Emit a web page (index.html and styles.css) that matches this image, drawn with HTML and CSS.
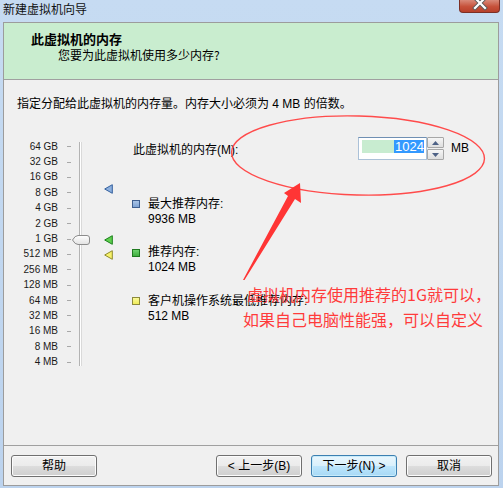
FILE: index.html
```html
<!DOCTYPE html>
<html lang="zh-CN">
<head>
<meta charset="utf-8">
<title>新建虚拟机向导</title>
<link rel="stylesheet" href="styles.css">
</head>
<body>
<div class="window">
  <div class="titlebar">
    <span class="title">新建虚拟机向导</span>
    <div class="close">
      <svg width="41" height="13" viewBox="0 0 41 13">
        <path d="M16 -2 L26 8 M26 -2 L16 8" stroke="#5a5a5a" stroke-width="4" stroke-linecap="square"/>
        <path d="M16 -2 L26 8 M26 -2 L16 8" stroke="#ffffff" stroke-width="2.2" stroke-linecap="square"/>
      </svg>
    </div>
  </div>
  <div class="panel">
    <div class="header">
      <div class="h-title">此虚拟机的内存</div>
      <div class="h-sub">您要为此虚拟机使用多少内存?</div>
    </div>
    <div class="main">
      <p class="intro">指定分配给此虚拟机的内存量。内存大小必须为 4 MB 的倍数。</p>
      <div class="mem">
        <div class="slider">
          <div class="scale">
            <div class="row"><span class="lbl">64 GB</span><span class="tick"></span></div>
            <div class="row"><span class="lbl">32 GB</span><span class="tick"></span></div>
            <div class="row"><span class="lbl">16 GB</span><span class="tick"></span></div>
            <div class="row"><span class="lbl">8 GB</span><span class="tick"></span></div>
            <div class="row"><span class="lbl">4 GB</span><span class="tick"></span></div>
            <div class="row"><span class="lbl">2 GB</span><span class="tick"></span></div>
            <div class="row"><span class="lbl">1 GB</span><span class="tick"></span></div>
            <div class="row"><span class="lbl">512 MB</span><span class="tick"></span></div>
            <div class="row"><span class="lbl">256 MB</span><span class="tick"></span></div>
            <div class="row"><span class="lbl">128 MB</span><span class="tick"></span></div>
            <div class="row"><span class="lbl">64 MB</span><span class="tick"></span></div>
            <div class="row"><span class="lbl">32 MB</span><span class="tick"></span></div>
            <div class="row"><span class="lbl">16 MB</span><span class="tick"></span></div>
            <div class="row"><span class="lbl">8 MB</span><span class="tick"></span></div>
            <div class="row"><span class="lbl">4 MB</span><span class="tick"></span></div>
          </div>
          <div class="track"></div>
          <svg class="thumb" width="18" height="10" viewBox="0 0 18 10">
            <defs>
              <linearGradient id="tg" x1="0" y1="0" x2="0" y2="1">
                <stop offset="0" stop-color="#ffffff"/>
                <stop offset="1" stop-color="#e2e2e2"/>
              </linearGradient>
            </defs>
            <path d="M0.5 5 Q3 0.5 6 0.5 L15 0.5 Q17.5 0.5 17.5 3 L17.5 7 Q17.5 9.5 15 9.5 L6 9.5 Q3 9.5 0.5 5 Z" fill="url(#tg)" stroke="#8c8c8c"/>
          </svg>
          <svg class="marker m-blue" width="9" height="10" viewBox="0 0 9 10"><path d="M0.7 5 L8.3 0.7 L8.3 9.3 Z" fill="#8db0de" stroke="#34609e" stroke-linejoin="round"/></svg>
          <svg class="marker m-green" width="9" height="10" viewBox="0 0 9 10"><path d="M0.7 5 L8.3 0.7 L8.3 9.3 Z" fill="#5fcf4f" stroke="#19801a" stroke-linejoin="round"/></svg>
          <svg class="marker m-yellow" width="9" height="10" viewBox="0 0 9 10"><path d="M0.7 5 L8.3 0.7 L8.3 9.3 Z" fill="#f7f26a" stroke="#8f8b2c" stroke-linejoin="round"/></svg>
        </div>
        <div class="right">
          <div class="memrow">
            <span class="memlabel">此虚拟机的内存(M):</span>
            <div class="numbox">
              <span class="fill"></span>
              <span class="sel">1024</span>
            </div>
            <div class="spin">
              <div class="sb"><svg width="7" height="4" viewBox="0 0 7 4"><path d="M0 4 L3.5 0 L7 4 Z" fill="#4d6185"/></svg></div>
              <div class="sb"><svg width="7" height="4" viewBox="0 0 7 4"><path d="M0 0 L3.5 4 L7 0 Z" fill="#4d6185"/></svg></div>
            </div>
            <span class="unit">MB</span>
          </div>
          <div class="legend">
            <div class="item">
              <span class="sq sq-blue"></span>
              <div class="itxt"><div>最大推荐内存:</div><div>9936 MB</div></div>
            </div>
            <div class="item">
              <span class="sq sq-green"></span>
              <div class="itxt"><div>推荐内存:</div><div>1024 MB</div></div>
            </div>
            <div class="item">
              <span class="sq sq-yellow"></span>
              <div class="itxt"><div>客户机操作系统最低推荐内存:</div><div>512 MB</div></div>
            </div>
          </div>
        </div>
      </div>
    </div>
    <div class="footer">
      <button class="btn">帮助</button>
      <span class="spacer"></span>
      <button class="btn">&lt; 上一步(B)</button>
      <button class="btn btn-default">下一步(N) &gt;</button>
      <button class="btn">取消</button>
    </div>
  </div>

  <svg class="annot-draw" width="503" height="488" viewBox="0 0 503 488">
    <ellipse cx="358" cy="155.5" rx="126.5" ry="39.5" fill="none" stroke="#ff4b4b" stroke-width="1.4" transform="rotate(1.5 358 155.5)"/>
    <path d="M243 280 L288 196 L284 193 L300 183 L301 203 L295 199 L244.5 280 Z" fill="#ff3535"/>
  </svg>
  <div class="annot-text">
    <div class="a1">虚拟机内存使用推荐的1G就可以，</div>
    <div class="a2">如果自己电脑性能强，可以自定义</div>
  </div>
</div>
</body>
</html>
```

FILE: styles.css
```css
html, body {
  margin: 0;
  padding: 0;
}
body {
  width: 503px;
  height: 488px;
  overflow: hidden;
  font-family: "Liberation Sans", "Noto Sans CJK SC", sans-serif;
  font-size: 12px;
  color: #000;
}
.window {
  position: relative;
  width: 503px;
  height: 488px;
  display: flex;
  flex-direction: column;
  background: linear-gradient(to bottom, #c6dbf2, #bcd3ee);
  box-sizing: border-box;
}
.titlebar {
  position: relative;
  height: 22px;
  flex: none;
  display: flex;
  align-items: flex-start;
}
.title {
  margin-left: 3px;
  margin-top: 1px;
  line-height: 16px;
  font-family: "Noto Sans CJK SC", sans-serif;
  font-size: 12px;
  color: #111;
}
.close {
  position: absolute;
  left: 459px;
  top: 0;
  width: 41px;
  height: 13px;
  box-sizing: border-box;
  border: 1px solid #7c2f25;
  border-top: none;
  border-radius: 0 0 4px 4px;
  background: linear-gradient(to bottom, #d98a79, #c6513a 55%, #b8402b);
  overflow: hidden;
}
.close svg {
  display: block;
  margin-left: -1px;
}
.panel {
  flex: 1;
  margin: 0 4px 2px 3px;
  border: 1px solid #9c9c9c;
  background: #f0f0f0;
  display: flex;
  flex-direction: column;
  min-height: 0;
}
.header {
  height: 57px;
  flex: none;
  background: #c9edcf;
  border-bottom: 1px solid #a0a0a0;
  padding-top: 8px;
  box-sizing: border-box;
  font-family: "Noto Sans CJK SC", sans-serif;
}
.h-title {
  padding-left: 27px;
  line-height: 15px;
  height: 15px;
  font-size: 13px;
  font-weight: bold;
}
.h-sub {
  padding-left: 54px;
  margin-top: 1px;
  line-height: 15px;
  height: 15px;
  font-size: 12px;
}
.main {
  flex: 1;
  padding: 17px 0 0 13px;
  min-height: 0;
}
.intro {
  margin: 0;
  line-height: 15px;
}
.mem {
  position: relative;
  display: flex;
  margin-top: 27px;
  margin-left: -13px;
}
.slider {
  position: relative;
  display: flex;
  width: 128px;
  flex: none;
}
.scale {
  display: flex;
  flex-direction: column;
}
.row {
  height: 15.4px;
  display: flex;
  align-items: center;
}
.lbl {
  width: 54px;
  text-align: right;
  font-size: 10px;
  color: #1a1a1a;
  line-height: 12px;
}
.tick {
  width: 4px;
  height: 1px;
  margin-left: 9px;
  background: #a8a8a8;
}
.track {
  width: 3px;
  height: 224px;
  margin-top: 3px;
  margin-left: 8px;
  background: linear-gradient(to right, #b3b3b3 0, #b3b3b3 1px, #ffffff 1px, #ffffff 2px, #d9d9d9 2px);
}
.thumb {
  position: absolute;
  left: 68px;
  top: 95.5px;
}
.marker {
  position: absolute;
  left: 100px;
}
.m-blue { top: 45px; }
.m-green { top: 96px; }
.m-yellow { top: 111px; }

.right {
  display: flex;
  flex-direction: column;
  margin-top: -2px;
}
.memrow {
  display: flex;
  align-items: center;
  height: 23px;
}
.memlabel {
  width: 225px;
  padding-left: 1px;
  padding-top: 3px;
  line-height: 15px;
}
.numbox {
  width: 69px;
  height: 23px;
  box-sizing: border-box;
  border: 1px solid #abc1d8;
  border-top-color: #6f8fb3;
  background: #fff;
  padding: 2px 2px 6px 3px;
  display: flex;
}
.fill {
  flex: 1;
  background: #c8ecd0;
}
.sel {
  width: 30px;
  background: #3399ff;
  color: #fff;
  font-size: 13px;
  line-height: 13px;
  text-align: right;
}
.spin {
  width: 17px;
  height: 23px;
  display: flex;
  flex-direction: column;
  justify-content: space-between;
}
.sb {
  height: 11px;
  box-sizing: border-box;
  border: 1px solid #a7a7a7;
  border-radius: 1px;
  background: linear-gradient(to bottom, #f6f6f6, #dedede);
  display: flex;
  align-items: center;
  justify-content: center;
}
.sb svg { display: block; }
.unit {
  margin-left: 7px;
  line-height: 15px;
}
.legend {
  display: flex;
  flex-direction: column;
  gap: 18.5px;
  margin-top: 36.5px;
}
.item {
  display: flex;
  align-items: flex-start;
}
.sq {
  width: 8px;
  height: 8px;
  box-sizing: border-box;
  margin-top: 3.5px;
  margin-right: 8px;
  flex: none;
}
.sq-blue { border: 1px solid #3f5f8f; background: linear-gradient(#a9c4e6, #7ea3d3); }
.sq-green { border: 1px solid #207a20; background: linear-gradient(#6fd36f, #3fae3f); }
.sq-yellow { border: 1px solid #8d8a3c; background: linear-gradient(#fbf99a, #f0ed5a); }
.itxt {
  line-height: 15px;
}

.footer {
  height: 40px;
  box-sizing: border-box;
  flex: none;
  border-top: 1px solid #a0a0a0;
  display: flex;
  align-items: flex-start;
  padding: 9px 6px 0 7px;
  gap: 9px;
}
.spacer { flex: 1; }
.btn {
  width: 86px;
  height: 22px;
  margin: 0;
  padding: 0;
  border: 1px solid #707070;
  border-radius: 3px;
  background: linear-gradient(to bottom, #f2f2f2 0, #ebebeb 50%, #dddddd 50%, #cfcfcf 100%);
  font-family: "Liberation Sans", "Noto Sans CJK SC", sans-serif;
  font-size: 12px;
  color: #000;
  line-height: 18px;
  box-shadow: inset 0 0 0 1px #fcfcfc;
}
.btn-default {
  border-color: #3c7fb1;
  background: linear-gradient(to bottom, #eaf6fd 0, #d9f0fc 50%, #bee6fd 50%, #a7d9f5 100%);
  box-shadow: inset 0 0 0 1px #c8ecfb;
}

.annot-draw {
  position: absolute;
  left: 0;
  top: 0;
  pointer-events: none;
}
.annot-text {
  position: absolute;
  left: 243px;
  top: 282px;
  font-family: "Noto Sans CJK SC", sans-serif;
  font-size: 16px;
  line-height: 25px;
  color: #ff3b3b;
  white-space: nowrap;
}
.a1 { padding-left: 4px; }
```
